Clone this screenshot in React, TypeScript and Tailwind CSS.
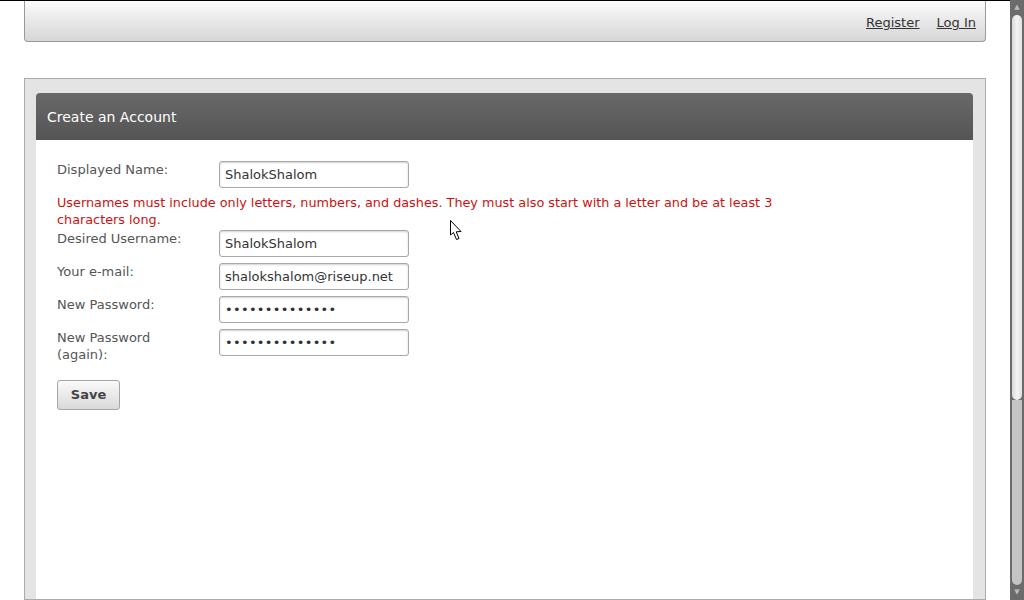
import React from 'react';

const font = { fontFamily: '"DejaVu Sans", Verdana, sans-serif' };

function Field({ label, value, type = 'text' }: { label: React.ReactNode; value: string; type?: string }) {
  return (
    <div className="flex items-start">
      <label className="w-[130px] mr-[32px] text-[13px] leading-[17px] text-[#555]">{label}</label>
      <input
        type={type}
        defaultValue={value}
        readOnly
        className={`h-[27px] w-[190px] rounded-[3px] border border-[#a8a8a8] bg-white px-[5px] text-[13px] text-[#333] shadow-[inset_0_1px_2px_rgba(0,0,0,0.18)] outline-none ${type === 'password' ? 'tracking-[0.3px]' : ''}`}
        style={font}
      />
    </div>
  );
}

function Scrollbar() {
  return (
    <div className="flex h-full w-[14px] shrink-0 flex-col items-center bg-[#6b6b6b]">
      <div className="flex h-[15px] items-center justify-center text-[7px] leading-none text-[#bbb]">▲</div>
      <div className="flex w-[10px] flex-1 flex-col">
        <div className="h-[385px] rounded-full bg-gradient-to-r from-[#d8d8d8] via-[#f4f4f4] to-[#e0e0e0]" />
        <div className="flex-1 rounded-b-full bg-[#c4c4c4]" />
      </div>
      <div className="flex h-[15px] items-center justify-center text-[7px] leading-none text-[#bbb]">▼</div>
    </div>
  );
}

export default function App() {
  return (
    <div className="relative flex h-[600px] w-[1024px] overflow-hidden bg-white" style={font}>
      <div className="flex min-w-0 flex-1 flex-col">
        <div className="h-[1px] bg-black" />
        <div className="mx-[24px] flex h-[41px] items-center justify-end gap-[17px] rounded-b-[4px] border border-t-0 border-[#9a9a9a] bg-gradient-to-b from-[#fbfbfb] to-[#d6d6d6] pr-[9px] pt-[4px] text-[13px] text-[#333]">
          <a className="underline">Register</a>
          <a className="underline">Log In</a>
        </div>
        <div className="mx-[24px] mt-[36px] flex-1 border border-[#ababab] bg-[#e4e4e4] pl-[11px] pr-[12px] pt-[14px]">
          <div className="flex h-full flex-col">
            <div className="flex h-[47px] items-center rounded-t-[4px] bg-gradient-to-b from-[#686868] to-[#555] px-[11px] pt-[2px] text-[14px] text-white">
              Create an Account
            </div>
            <div className="flex-1 bg-white px-[21px] pt-[21px]">
              <div className="flex flex-col gap-[6px]">
                <Field label="Displayed Name:" value="ShalokShalom" />
                <div className="-mb-[4px] w-[730px] text-[12.8px] leading-[17px] text-[#cc1111]">
                  Usernames must include only letters, numbers, and dashes. They must also start with a letter and be at least 3 characters long.
                </div>
                <Field label="Desired Username:" value="ShalokShalom" />
                <Field label="Your e-mail:" value="shalokshalom@riseup.net" />
                <Field label="New Password:" value="aaaaaaaaaaaaaa" type="password" />
                <Field label={<>New Password<br />(again):</>} value="aaaaaaaaaaaaaa" type="password" />
              </div>
              <button className="mt-[17px] h-[30px] w-[63px] rounded-[3px] border border-[#a5a5a5] bg-gradient-to-b from-[#fafafa] to-[#d9d9d9] text-[13px] font-bold text-[#444]">
                Save
              </button>
            </div>
          </div>
        </div>
      </div>
      <Scrollbar />
      <svg className="absolute left-[450px] top-[220px]" width="14" height="22" viewBox="0 0 14 22">
        <path d="M0.5 0.5 L0.5 15 L3.5 12.5 L6.5 19.5 L9 18.5 L6.2 11.8 L11 11.5 Z" fill="#fff" stroke="#000" strokeWidth="1" strokeLinejoin="round" />
      </svg>
    </div>
  );
}
